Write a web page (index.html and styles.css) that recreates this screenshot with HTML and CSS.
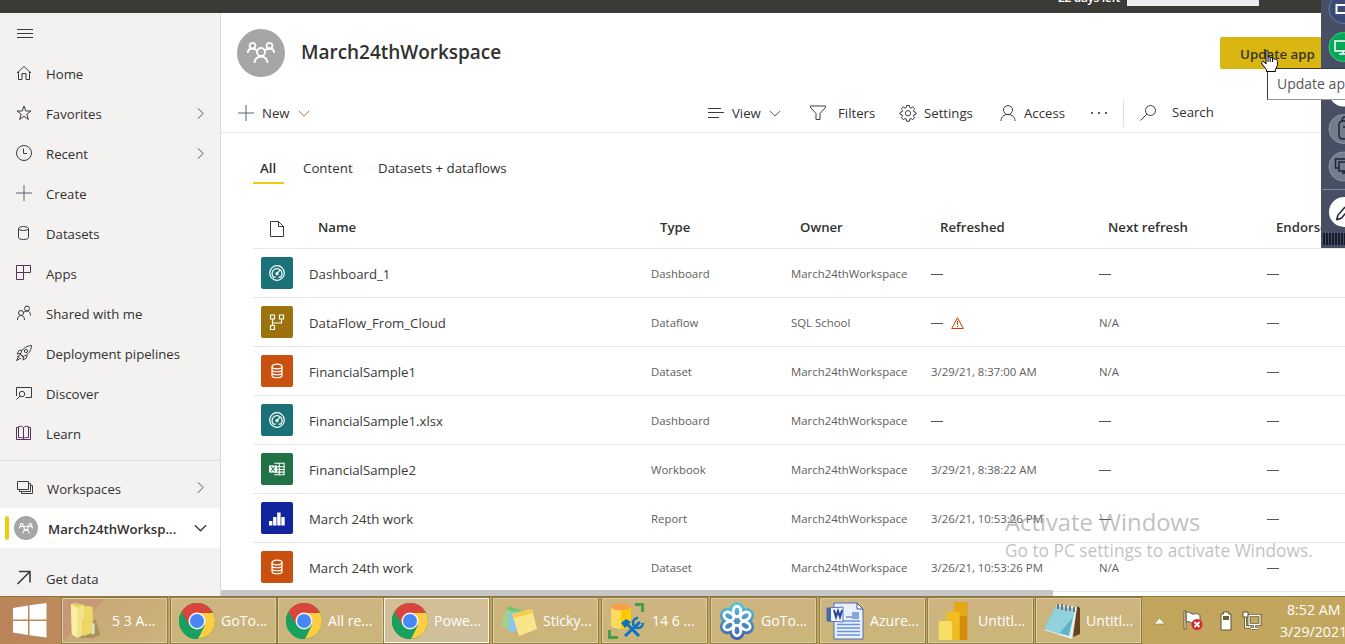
FILE: index.html
```html
<!DOCTYPE html>
<html lang="en">
<head>
<meta charset="utf-8">
<title>March24thWorkspace</title>
<link rel="stylesheet" href="styles.css">
</head>
<body>
<svg class="defs" width="0" height="0">
  <defs>
    <symbol id="right" viewBox="0 0 8 14"><path d="M1 1l6 6-6 6"/></symbol>
    <symbol id="down" viewBox="0 0 14 8"><path d="M1 1l6 6 6-6"/></symbol>
    <symbol id="plus" viewBox="0 0 16 16"><path d="M8 0v16M0 8h16"/></symbol>
    <symbol id="people" viewBox="0 0 28 22"><circle cx="14" cy="10" r="4"/><circle cx="5.500" cy="3.800" r="2.900"/><circle cx="22.500" cy="3.800" r="2.900"/><path d="M7.500 21c0-4 3-6.500 6.500-6.500s6.500 2.500 6.500 6.500M.8 11c0-3 2-4.500 4.700-4.500 2 0 3.300.8 4 2M27.200 11c0-3-2-4.500-4.700-4.500-2 0-3.300.8-4 2"/></symbol>
    <symbol id="gauge" viewBox="0 0 16 16"><circle cx="8" cy="8" r="7.300"/><path d="M4.600 12.200a5 5 0 1 1 6.900 0M4.600 12.200h2M9.500 12.200h2M8 8.700l3.300-4"/><circle cx="8" cy="8.700" r="1"/></symbol>
    <symbol id="db" viewBox="0 0 14 16"><ellipse cx="7" cy="3.500" rx="5" ry="2.300"/><path d="M2 3.500v9c0 3 10 3 10 0v-9M2 6.500c0 3 10 3 10 0M2 9.500c0 3 10 3 10 0"/></symbol>
    <symbol id="chrome" viewBox="0 0 36 36"><circle cx="18" cy="18" r="18" fill="#18a05e"/><path d="M18 18L2.400 9A18 18 0 0 1 33.600 9z" fill="#d9453c"/><path d="M18 10h16.100A18 18 0 0 1 19 36l7-14z" fill="#fdcd42"/><path d="M2.400 9l8 13 7.600-4V9z" fill="#d9453c"/><path d="M2.400 9l8 13.500A9 9 0 0 0 20 27l-2 9A18 18 0 0 1 2.400 9z" fill="#18a05e"/><circle cx="18" cy="18" r="8.500" fill="#f4f4f4"/><circle cx="18" cy="18" r="7" fill="#4788f4"/></symbol>
  </defs>
</svg>
<div class="screen">
  <header class="topbar"><span class="trial">22 days left</span><span class="topbox"></span></header>
  <div class="main">
    <nav class="side">
      <div class="burger"><svg width="16" height="10" viewBox="0 0 16 10"><path d="M0 .5h16M0 4.500h16M0 8.500h16"/></svg></div>
      <div class="nav"><svg viewBox="0 0 16 16"><path d="M1 8l7-6.500L15 8M2.500 7v7.500h3.500v-6h4v6h3.500V7"/></svg><span>Home</span></div>
      <div class="nav"><svg viewBox="0 0 16 16"><path d="M8 1l1.800 5h5.200l-4.200 3.200 1.600 5.300L8 11.300l-4.400 3.200 1.600-5.300L1 6h5.200z"/></svg><span>Favorites</span><svg class="go"><use href="#right"/></svg></div>
      <div class="nav"><svg viewBox="0 0 16 16"><circle cx="8" cy="8" r="7.500"/><path d="M7.500 3.500v5h3.500"/></svg><span>Recent</span><svg class="go"><use href="#right"/></svg></div>
      <div class="nav"><svg class="bluish"><use href="#plus"/></svg><span>Create</span></div>
      <div class="nav"><svg viewBox="0 0 16 16"><ellipse cx="7.500" cy="3.500" rx="5" ry="2"/><path d="M2.500 3.500v9c0 2.700 10 2.700 10 0v-9"/></svg><span>Datasets</span></div>
      <div class="nav purple"><svg viewBox="0 0 16 16"><path d="M.5.500h14v7H.5zM7.500.500v14h-7v-7"/></svg><span>Apps</span></div>
      <div class="nav"><svg viewBox="0 0 16 16"><circle cx="11" cy="3.500" r="2.500"/><circle cx="5" cy="8" r="2.500"/><path d="M1.500 15c0-3 1.500-4.500 3.500-4.500S8.500 12 8.500 15M7.500 8c.5-1.500 2-2 3.500-2 2 0 3.500 1.500 3.500 4.500"/></svg><span>Shared with me</span></div>
      <div class="nav"><svg viewBox="0 0 16 16"><path d="M4.500 9C6 4 10 .7 15.500.5 15.300 6 12 10 7 11.500zM6 5L3 5.500 1 9l3.500-.5M11 10l-.5 3L7 15l.3-3.500M3.500 8.500l4 4M3 11l-2.500 4.500L5 13M4 10l-3 2"/><circle cx="10" cy="6" r="1.600"/></svg><span>Deployment pipelines</span></div>
      <div class="nav"><svg viewBox="0 0 16 16"><path d="M.5 11V2.500h15v10h-6M.5 14.500L4 11"/><circle cx="6" cy="9" r="2.700"/></svg><span>Discover</span></div>
      <div class="nav purple"><svg viewBox="0 0 16 16"><path d="M2.500 12.500v-11C5 1 7 1.500 7.500 2.500 8 1.500 10 1 12.500 1.500v11c-2.500 0-4.500 0-5 1-.5-1-2.500-1-5-1zM7.500 2.500v11M2.500 2.500h-2v12h14v-12h-2"/></svg><span>Learn</span></div>
      <div class="rule"></div>
      <div class="nav spaces"><svg viewBox="0 0 16 16"><path d="M.5 1.500h11v8H.5zM11.500 3.500h2v8h-11v-2M13.500 5.500h2v8h-11v-2"/></svg><span>Workspaces</span><svg class="go"><use href="#right"/></svg></div>
      <div class="nav current"><i class="marker"></i><b class="avatar mini"><svg><use href="#people"/></svg></b><span>March24thWorksp...</span><svg class="drop"><use href="#down"/></svg></div>
      <div class="nav getdata"><svg viewBox="0 0 16 16"><path d="M1.500 14L13.500 2M3 1.500h11v11"/></svg><span>Get data</span></div>
    </nav>
    <main class="content">
      <div class="title"><b class="avatar"><svg><use href="#people"/></svg></b><h1>March24thWorkspace</h1><button class="update">Update app</button></div>
      <div class="toolbar">
        <div class="tool new"><svg class="bluish"><use href="#plus"/></svg><span>New</span><svg class="caret"><use href="#down"/></svg></div>
        <div class="tool view"><svg viewBox="0 0 16 16"><path d="M0 3.500h13M0 7.500h16M0 12.500h11"/></svg><span>View</span><svg class="caret"><use href="#down"/></svg></div>
        <div class="tool filters"><svg viewBox="0 0 16 16"><path d="M.5 1h15v1.500l-5.500 6v6H6v-6l-5.500-6z"/></svg><span>Filters</span></div>
        <div class="tool settings"><svg viewBox="0 0 16 16"><path d="M6.700.5h2.600l.4 2 1.300.6 1.800-1.200 1.800 1.800-1.200 1.800.5 1.300 2 .4v2.200l-2 .4-.5 1.400 1.200 1.700-1.800 1.800-1.800-1.100-1.300.5-.4 2.200H6.700l-.4-2.200-1.300-.5-1.800 1.100-1.800-1.800 1.200-1.700-.5-1.400-2-.4V7.200l2-.4.5-1.300-1.200-1.800 1.800-1.800L5 3.100l1.300-.6z"/><circle cx="8" cy="8.200" r="2.600"/></svg><span>Settings</span></div>
        <div class="tool access"><svg viewBox="0 0 16 16"><circle cx="8" cy="5" r="4.500"/><path d="M1 16c0-4 3-6.500 7-6.500s7 2.500 7 6.500"/></svg><span>Access</span></div>
        <div class="more"><i></i><i></i><i></i></div>
        <div class="tool search"><svg viewBox="0 0 16 16"><circle cx="10.500" cy="5.500" r="5"/><path d="M7 9L.5 15.500"/></svg><span>Search</span></div>
      </div>
      <div class="tabs"><span class="on">All</span><span class="tab2">Content</span><span class="tab3">Datasets + dataflows</span></div>
      <div class="table">
        <div class="row head"><svg width="14" height="17" viewBox="0 0 14 17"><path d="M.5.500h8l5 5v10H.5zM8.500.500v5h5"/></svg><span>Name</span><span>Type</span><span>Owner</span><span>Refreshed</span><span>Next refresh</span><span>Endorsement</span></div>
        <div class="row"><b class="tile teal"><svg><use href="#gauge"/></svg></b><span class="name">Dashboard_1</span><span>Dashboard</span><span>March24thWorkspace</span><span class="dash"></span><span class="dash"></span><span class="dash"></span></div>
        <div class="row"><b class="tile gold"><svg viewBox="0 0 16 16"><path d="M1.500 1h4v4h-4zM10.500 1h4v4h-4zM1.500 11.500h4v4h-4zM3.500 5v6.500M3.500 9h9V5"/></svg></b><span class="name">DataFlow_From_Cloud</span><span>Dataflow</span><span>SQL School</span><span class="dash warned"><svg width="13" height="12" viewBox="0 0 13 12"><path d="M6.500.8l5.800 10.700H.7zM6.500 4v4M6.500 9v1.200"/></svg></span><span>N/A</span><span class="dash"></span></div>
        <div class="row"><b class="tile orange"><svg><use href="#db"/></svg></b><span class="name">FinancialSample1</span><span>Dataset</span><span>March24thWorkspace</span><span>3/29/21, 8:37:00 AM</span><span>N/A</span><span class="dash"></span></div>
        <div class="row"><b class="tile teal"><svg><use href="#gauge"/></svg></b><span class="name">FinancialSample1.xlsx</span><span>Dashboard</span><span>March24thWorkspace</span><span class="dash"></span><span class="dash"></span><span class="dash"></span></div>
        <div class="row"><b class="tile green"><svg viewBox="0 0 18 16"><path d="M6 1.500h11v13H6M6 5.500h11M6 8.500h11M6 11.500h11M11.500 1.500v13"/><path d="M0 4h9v8H0z" fill="#fff" stroke="none"/><path d="M2.500 5.500l4 5M6.500 5.500l-4 5" stroke="#217346"/></svg></b><span class="name">FinancialSample2</span><span>Workbook</span><span>March24thWorkspace</span><span>3/29/21, 8:38:22 AM</span><span class="dash"></span><span class="dash"></span></div>
        <div class="row"><b class="tile blue"><svg viewBox="0 0 16 16"><path d="M0 11h3.400v4.500H0zM4.100 7h3.400v8.500H4.100zM8.200 2.500h3.400v13H8.200zM12.300 7h3.400v8.500h-3.400z" fill="#fff" stroke="none"/></svg></b><span class="name">March 24th work</span><span>Report</span><span>March24thWorkspace</span><span>3/26/21, 10:53:26 PM</span><span class="dash"></span><span class="dash"></span></div>
        <div class="row"><b class="tile orange"><svg><use href="#db"/></svg></b><span class="name">March 24th work</span><span>Dataset</span><span>March24thWorkspace</span><span>3/26/21, 10:53:26 PM</span><span>N/A</span><span class="dash"></span></div>
      </div>
      <div class="scroll"></div>
    </main>
  </div>
  <footer class="taskbar">
    <div class="start"><svg width="34" height="35" viewBox="0 0 34 35"><path d="M0 5l15-2.500v14H0zM16.500 2.200L33.500 0v16.500h-17zM0 18h15v14L0 29.500zM16.500 18h17v16.500l-17-2.300z" fill="#fff"/></svg></div>
    <div class="tasks">
      <div class="task first"><svg viewBox="0 0 36 40"><path d="M8 38l18-20 5 17-8 3z" fill="#8d7440" opacity=".5"/><path d="M0 2l4-1 10 2v31l-7 4-6-4z" fill="#e8cf65"/><path d="M0 2l7 4v32l-6-4z" fill="#fbf0a8"/><path d="M14 4l9 1v27l-10 4z" fill="#edd765"/><path d="M7 6l7-3v13l-2 3v16l-5 3z" fill="#f4e487"/><path d="M22 23l3-1v11l-3 2z" fill="#d7e5bd"/></svg><span>5 3 A...</span></div>
      <div class="task"><svg><use href="#chrome"/></svg><span>GoTo...</span></div>
      <div class="task"><svg><use href="#chrome"/></svg><span>All re...</span></div>
      <div class="task active"><svg><use href="#chrome"/></svg><span>Powe...</span></div>
      <div class="task"><svg viewBox="0 0 36 36"><path d="M7 3l15 5-6 19-16-4z" fill="#9ed58b"/><path d="M7 3l15 5-1 3L6 7z" fill="#6fc664"/><path d="M9 9l17-1v20l-19 1z" fill="#8fc3f1"/><path d="M11 11l20-5 5 20-18 7z" fill="#fbe58b"/><path d="M11 11l20-5 1 4-20 5z" fill="#f5cf4c"/></svg><span>Sticky...</span></div>
      <div class="task"><svg viewBox="0 0 36 36"><path d="M1 4v18c0 5 20 5 20 0V4z" fill="#fddc5b"/><path d="M11 4h10v18c0 2-5 4-10 4z" fill="#ffcc00"/><ellipse cx="11" cy="4" rx="10" ry="3.500" fill="#f6a04c"/><path d="M25 0h9v9h-3V3h-6zM-2 27v9h10v-3H1v-6z" fill="#43a047"/><path d="M16 20l13 13M30 19L15 33" stroke="#0873c9" stroke-width="3"/><path d="M11 20l5-4 5 3-6 6z" fill="#0873c9"/><path d="M28 15a5 5 0 1 0 5 5" fill="none" stroke="#0873c9" stroke-width="2.500"/></svg><span>14 6 ...</span></div>
      <div class="task"><svg viewBox="0 0 36 40"><defs><linearGradient id="go" gradientUnits="userSpaceOnUse" x1="0" y1="0" x2="0" y2="40"><stop stop-color="#5cc8da"/><stop offset="1" stop-color="#3c60ae"/></linearGradient></defs><g fill="url(#go)"><circle cx="18" cy="20" r="15"/><circle cx="18" cy="8" r="8"/><circle cx="28" cy="14" r="8"/><circle cx="28" cy="26" r="8"/><circle cx="18" cy="32" r="8"/><circle cx="8" cy="26" r="8"/><circle cx="8" cy="14" r="8"/></g><g fill="none" stroke="#fff" stroke-width="3"><ellipse cx="18" cy="10" rx="4" ry="5.500"/><ellipse cx="18" cy="10" rx="4" ry="5.500" transform="rotate(60 18 20)"/><ellipse cx="18" cy="10" rx="4" ry="5.500" transform="rotate(120 18 20)"/><ellipse cx="18" cy="10" rx="4" ry="5.500" transform="rotate(180 18 20)"/><ellipse cx="18" cy="10" rx="4" ry="5.500" transform="rotate(240 18 20)"/><ellipse cx="18" cy="10" rx="4" ry="5.500" transform="rotate(300 18 20)"/></g></svg><span>GoTo...</span></div>
      <div class="task"><svg viewBox="0 0 36 36"><path d="M6 0h23l6 6v30H6z" fill="#e9f1ff" stroke="#4f6fb0"/><path d="M29 0v6h6z" fill="#fff" stroke="#32559c"/><path d="M9 18h23M9 21.500h23M9 25h23M9 28.500h23M9 32h23M18 14h6" stroke="#6a93d8" stroke-width="1.500"/><path d="M24 9h7v7h-7z" fill="#86a5db"/><path d="M-1 5l16-1v15l-16-1z" fill="#f4f7ff" stroke="#5370b0"/><path d="M-1 5h4v13h-4z" fill="#4569b0"/><path d="M6 7l2 7 2-6 2 6 2-7" stroke="#28458e" stroke-width="2" fill="none"/></svg><span>Azure...</span></div>
      <div class="task"><svg viewBox="0 0 36 40"><path d="M18 0h12q2 0 2 2v38H18z" fill="#d48b09"/><path d="M18 0h12q2 0 2 2v13H18z" fill="#e5a815"/><path d="M10 12q0-2 2-2h10q2 0 2 2v28H10z" fill="#efbd23"/><path d="M2 22q0-2 2-2h10q2 0 2 2v18H2z" fill="#f8de64"/></svg><span>Untitl...</span></div>
      <div class="task"><svg viewBox="0 0 36 36"><path d="M33 3l3 2v26l-7 3z" fill="#65431f"/><path d="M13 1l20 3-5 32L0 27z" fill="#e7f0f1"/><path d="M12 3l19 3-6 27L0 26z" fill="#59b5c7"/><path d="M12 3l19 3-2 8-14 17-15-5z" fill="#91d2dc"/><path d="M14 1v5M18 1v6M22 2v6M26 3v5M30 4v5" stroke="#777" stroke-width="2"/></svg><span>Untitl...</span></div>
    </div>
    <div class="tray">
      <svg class="up" width="11" height="6" viewBox="0 0 11 6"><path d="M0 6l5.500-6L11 6z" fill="#f8f5e9" stroke="#806a35" stroke-width=".5"/></svg>
      <svg class="flag" width="20" height="21" viewBox="0 0 20 21"><path d="M1 1h2v18H1zM3 2c4-1 5 3 8 2s4 0 6 1v8c-4-1-5 1-8 0s-3-2-6-1z" fill="#fff" stroke="#6c5a32"/><circle cx="14" cy="14.500" r="5.500" fill="#d42c2c"/><path d="M11.500 12l5 5m0-5l-5 5" stroke="#fff" stroke-width="1.800"/></svg>
      <svg class="battery" width="12" height="20" viewBox="0 0 12 20"><path d="M3.500 1h5v2H11v16H1V3h2.500z" fill="#fff" stroke="#5e522f"/><path d="M3 5h6v4H3z" fill="#6d6138"/></svg>
      <svg class="net" width="20" height="20" viewBox="0 0 20 20"><path d="M3.500 6v10h5M7 4.500h11v9H7zM12.500 14v3M9 17.500h7M3.500 1.500v4" stroke="#5e522f" stroke-width="3" fill="none"/><path d="M3.500 6v10h5M7 4.500h11v9H7zM12.500 14v3M9 17.500h7" stroke="#fff" stroke-width="1.300" fill="none"/><path d="M1 1h5v5H1z" fill="#fff" stroke="#5e522f"/></svg>
      <div class="clock"><span class="time">8:52 AM</span><span>3/29/2021</span></div>
    </div>
  </footer>
  <div class="watermark"><p>Activate Windows</p><span>Go to PC settings to activate Windows.</span></div>
  <aside class="dock">
    <svg width="24" height="248" viewBox="0 0 24 248" fill="none">
      <circle cx="22.500" cy="9" r="14.500" fill="#3a4b75" stroke="#657da9"/><path d="M15.500 5h12v8h-12z" stroke="#fff" stroke-width="2"/>
      <circle cx="22.500" cy="47" r="14.500" fill="#06a557" stroke="#2fd282"/><path d="M14 41h14v10H14zM22 51v3M18 54h9" stroke="#fff" stroke-width="1.500"/>
      <circle cx="22.500" cy="92" r="14.500" fill="#fff"/>
      <circle cx="22.500" cy="129" r="14.500" fill="#747d8c" stroke="#8d95a2"/><path d="M24 121h-2q-4 0-4 4v10q0 4 4 4h2M21 121q0-4 3-4M22 127h2" stroke="#1e2636" stroke-width="1.500"/>
      <circle cx="22.500" cy="166.500" r="14.500" fill="#747d8c" stroke="#8d95a2"/><path d="M18 168h-3.500v-9H26M18 162h10v9H18zM23 171v2M21 173h4" stroke="#1e2636" stroke-width="1.500"/>
      <path d="M1 189.500h23" stroke="#7b879e"/><circle cx="23" cy="212" r="15" fill="#fff"/><path d="M15.500 220l1.500-5 7-8M15.500 220l5-2 5-6" stroke="#1e2636" stroke-width="1.500"/>
    </svg>
    <div class="grip"></div>
  </aside>
  <div class="tooltip">Update app</div>
  <svg class="cursor" width="17" height="22" viewBox="0 0 17 22"><path d="M5 1.500q0-1 1-1t1 1V7q1-1 2.200 0v1q1.200-1 2.300.2v1Q13 8 14 9.500q.3-.8 1.500 0 1 .5.900 2v4l-2 4v2h-9v-2L1 14q-1-2.500.5-2.700Q3 11 5 14z" fill="#fff" stroke="#000"/><path d="M7 7v5M9.200 8v4M11.500 9v3" stroke="#000"/></svg>
</div>
</body>
</html>
```
FILE: styles.css
```css
* { box-sizing: border-box; }
body { margin: 0; overflow: hidden; font-family: "Open Sans", "Noto Sans", sans-serif; color: #323130; }
.defs { position: absolute; }
.screen { position: relative; display: flex; flex-direction: column; width: 1345px; height: 644px; overflow: hidden; background: #fff; }
svg { flex: none; overflow: visible; }
span { white-space: nowrap; }

.topbar { display: flex; flex: none; height: 13px; background: #3b3a37; overflow: hidden; }
.trial { width: 69px; margin-left: 1058px; height: 18px; margin-top: -11px; color: #fff; font-size: 12px; line-height: 18px; font-weight: 550; letter-spacing: -.35px; }
.topbox { width: 132px; height: 6px; background: #ececec; }

.main { display: flex; flex: none; height: 583px; overflow: hidden; }
.side { flex: none; width: 221px; background: #f3f2f1; border-right: 1px solid #dcdbda; font-size: 13.2px; }
.side svg, .toolbar svg, .head svg { fill: none; stroke: #3b3a3d; stroke-width: 1; }
.burger { display: flex; align-items: center; height: 41px; padding-left: 17px; }
.nav { display: flex; align-items: center; height: 40px; padding-left: 16px; }
.nav > svg:first-child { width: 16px; height: 16px; margin-right: 14px; margin-top: -2px; }
.side .purple svg { stroke: #54305a; }
.side .bluish, .toolbar .bluish { stroke: #56636e; }
.nav .go { width: 7px; height: 13px; margin-left: auto; margin-right: 16px; margin-top: -2px; }
.rule { height: 1px; margin: 6px 0 8px; background: #dedddc; }
.spaces { height: 39px; padding-left: 17px; }
.current { padding-left: 5px; background: #fff; font-weight: 600; }
.current span { padding-top: 1px; }
.marker { width: 4px; height: 24px; margin-right: 5px; border-radius: 2px; background: #f2c811; }
.avatar { display: flex; flex: none; align-items: center; justify-content: center; width: 48px; height: 48px; border-radius: 50%; background: #a6a6a6; }
.avatar svg { width: 28px; height: 22px; fill: none; stroke: #fff; stroke-width: 1.8; }
.avatar.mini { width: 24px; height: 24px; margin-right: 10px; }
.avatar.mini svg { width: 14px; height: 11px; stroke: #fff; stroke-width: 2.2; }
.side .drop { width: 13px; height: 8px; margin-left: auto; margin-right: 13px; stroke-width: 1.5; }
.getdata { margin-top: 11px; }
.getdata svg { stroke-width: 1.6 !important; }

.content { flex: 1; min-width: 0; display: flex; flex-direction: column; overflow: hidden; }
.title { display: flex; flex: none; align-items: center; height: 80px; padding-left: 16px; }
h1 { margin: 0 1px 2px 16px; width: 200px; font-size: 19px; font-weight: 570; letter-spacing: -.03px; white-space: nowrap; }
.update { width: 125px; height: 32px; margin-left: 718px; flex: none; padding: 2px 0 0 20px; border: 0; border-radius: 2px; background: #d9b611; color: #3b351d; font: 570 13.3px "Open Sans", sans-serif; text-align: left; }
.toolbar { display: flex; flex: none; align-items: center; height: 40px; border-bottom: 1px solid #e6e6e6; font-size: 13.2px; }
.tool { display: flex; flex: none; align-items: center; }
.tool > svg:first-child { width: 16px; height: 16px; margin-right: 8px; }
.tool .caret { width: 12px; height: 7px; margin-left: 8px; margin-top: 2px; }
.new { width: 469px; padding-left: 17px; }
.toolbar .new .caret { stroke: #a45d24; }
.view { width: 119px; padding-left: 18px; }
.filters { width: 91px; }
.filters > svg:first-child { margin-right: 12px; margin-left: 1px; }
.settings { width: 100px; }
.access { width: 91px; }
.more { display: flex; gap: 5px; width: 32px; }
.more i { width: 2px; height: 2px; background: #66605c; }
.search { height: 28px; padding-left: 16px; border-left: 1px solid #e1e1e1; }
.search span { padding-bottom: 2px; }
.search > svg:first-child { margin-right: 16px; }
.tabs { display: flex; flex: none; height: 75px; padding: 20px 0 0 32px; font-size: 13.3px; line-height: 30px; }
.tabs span { height: 31px; }
.on { width: 31px; padding-left: 7px; border-bottom: 2px solid #f2c811; font-weight: 600; }
.tab2 { margin-left: 19px; width: 75px; }
.table { flex: none; margin-left: 32px; }
.row { display: grid; grid-template-columns: 56px 342px 140px 140px 168px 168px 168px; align-items: center; height: 49px; border-bottom: 1px solid #e6e6e6; color: #605e5c; font-size: 11.4px; }
.row > span { padding-top: 1px; }
.row .name { color: #3b3a39; font-size: 13.2px; padding-top: 2px; }
.head { height: 41px; color: #323130; font-size: 13.2px; font-weight: 550; }
.head > svg { margin-left: 17px; margin-top: 2px; }
.head > span { padding: 0 0 2px 9px; }
.tile { display: flex; align-items: center; justify-content: center; width: 32px; height: 32px; margin-left: 8px; border-radius: 2px; }
.tile svg { width: 16px; height: 16px; fill: none; stroke: #fff; stroke-width: 1.2; }
.teal { background: #1a7278; }
.gold { background: #9b720d; }
.orange { background: #ca5010; }
.green { background: #217346; }
.blue { background: #12239e; }
.row .dash { display: flex; align-items: center; padding-top: 2px; }
.dash::before { content: ""; width: 12px; height: 1px; background: #555; }
.warned svg { margin-left: 8px; fill: none; stroke: #d83b01; }
.scroll { position: absolute; left: 221px; top: 590px; width: 832px; height: 6px; background: #c6c6c6; }

.taskbar { position: relative; display: flex; flex: none; height: 48px; border-top: 1px solid #8d753b; background: linear-gradient(90deg, #b98459 0, #bc8a5b 60px, #c3a369 180px, #c0a25d 500px, #c2a65d 1345px); color: #fff; }
.start { flex: none; width: 61px; padding: 6px 0 0 13px; }
.tasks { display: grid; grid-template-columns: 109px 107px 106px 109px 109px 109px 109px 108px 108px 108px; }
.task { display: flex; align-items: center; width: 107px; height: 47px; padding-left: 8px; border: 1px solid #e1d1a6; outline: 1px solid #907c46; outline-offset: -1px; box-shadow: inset 0 0 0 1px #ddcda3; background: linear-gradient(180deg, #ceb482, #cab578); font-size: 14.1px; }
.task.first { background: linear-gradient(135deg, #c69877 0 29%, #c8aa78 30%, #cbb27c); }
.task.active { background: linear-gradient(180deg, #d3bd95, #cfc09b); box-shadow: inset 0 0 0 1px #fff8e6; }
.task svg { width: 36px; height: 38px; margin-right: 6px; }
.tray { display: flex; align-items: center; }
.up { margin-left: 11px; }
.flag { margin-left: 18px; }
.battery { margin-left: 17px; }
.net { margin-left: 10px; }
.clock { display: flex; flex-direction: column; width: 67px; margin-left: 18px; font-size: 14.2px; line-height: 22px; }
.time { padding-left: 7px; }

.watermark { position: absolute; left: 1005px; top: 507px; color: rgba(130, 130, 130, .5); }
.watermark p { margin: 0; font-size: 23.8px; line-height: 30px; white-space: nowrap; }
.watermark span { display: block; font-size: 17.3px; line-height: 28px; }
.dock { position: absolute; left: 1321px; top: 0; width: 24px; height: 248px; overflow: hidden; background: #474f64; }
.grip { position: absolute; left: 2px; top: 233px; width: 22px; height: 12px; background: repeating-linear-gradient(90deg, #151b29 0 2px, #474f64 2px 3px); }
.tooltip { position: absolute; left: 1267px; top: 68px; width: 90px; height: 32px; padding-left: 9px; border: 1px solid #3b3b3b; border-bottom-color: #999; background: #fff; color: #575757; font-size: 14px; line-height: 29px; white-space: nowrap; }
.cursor { position: absolute; left: 1261px; top: 50px; }
```
